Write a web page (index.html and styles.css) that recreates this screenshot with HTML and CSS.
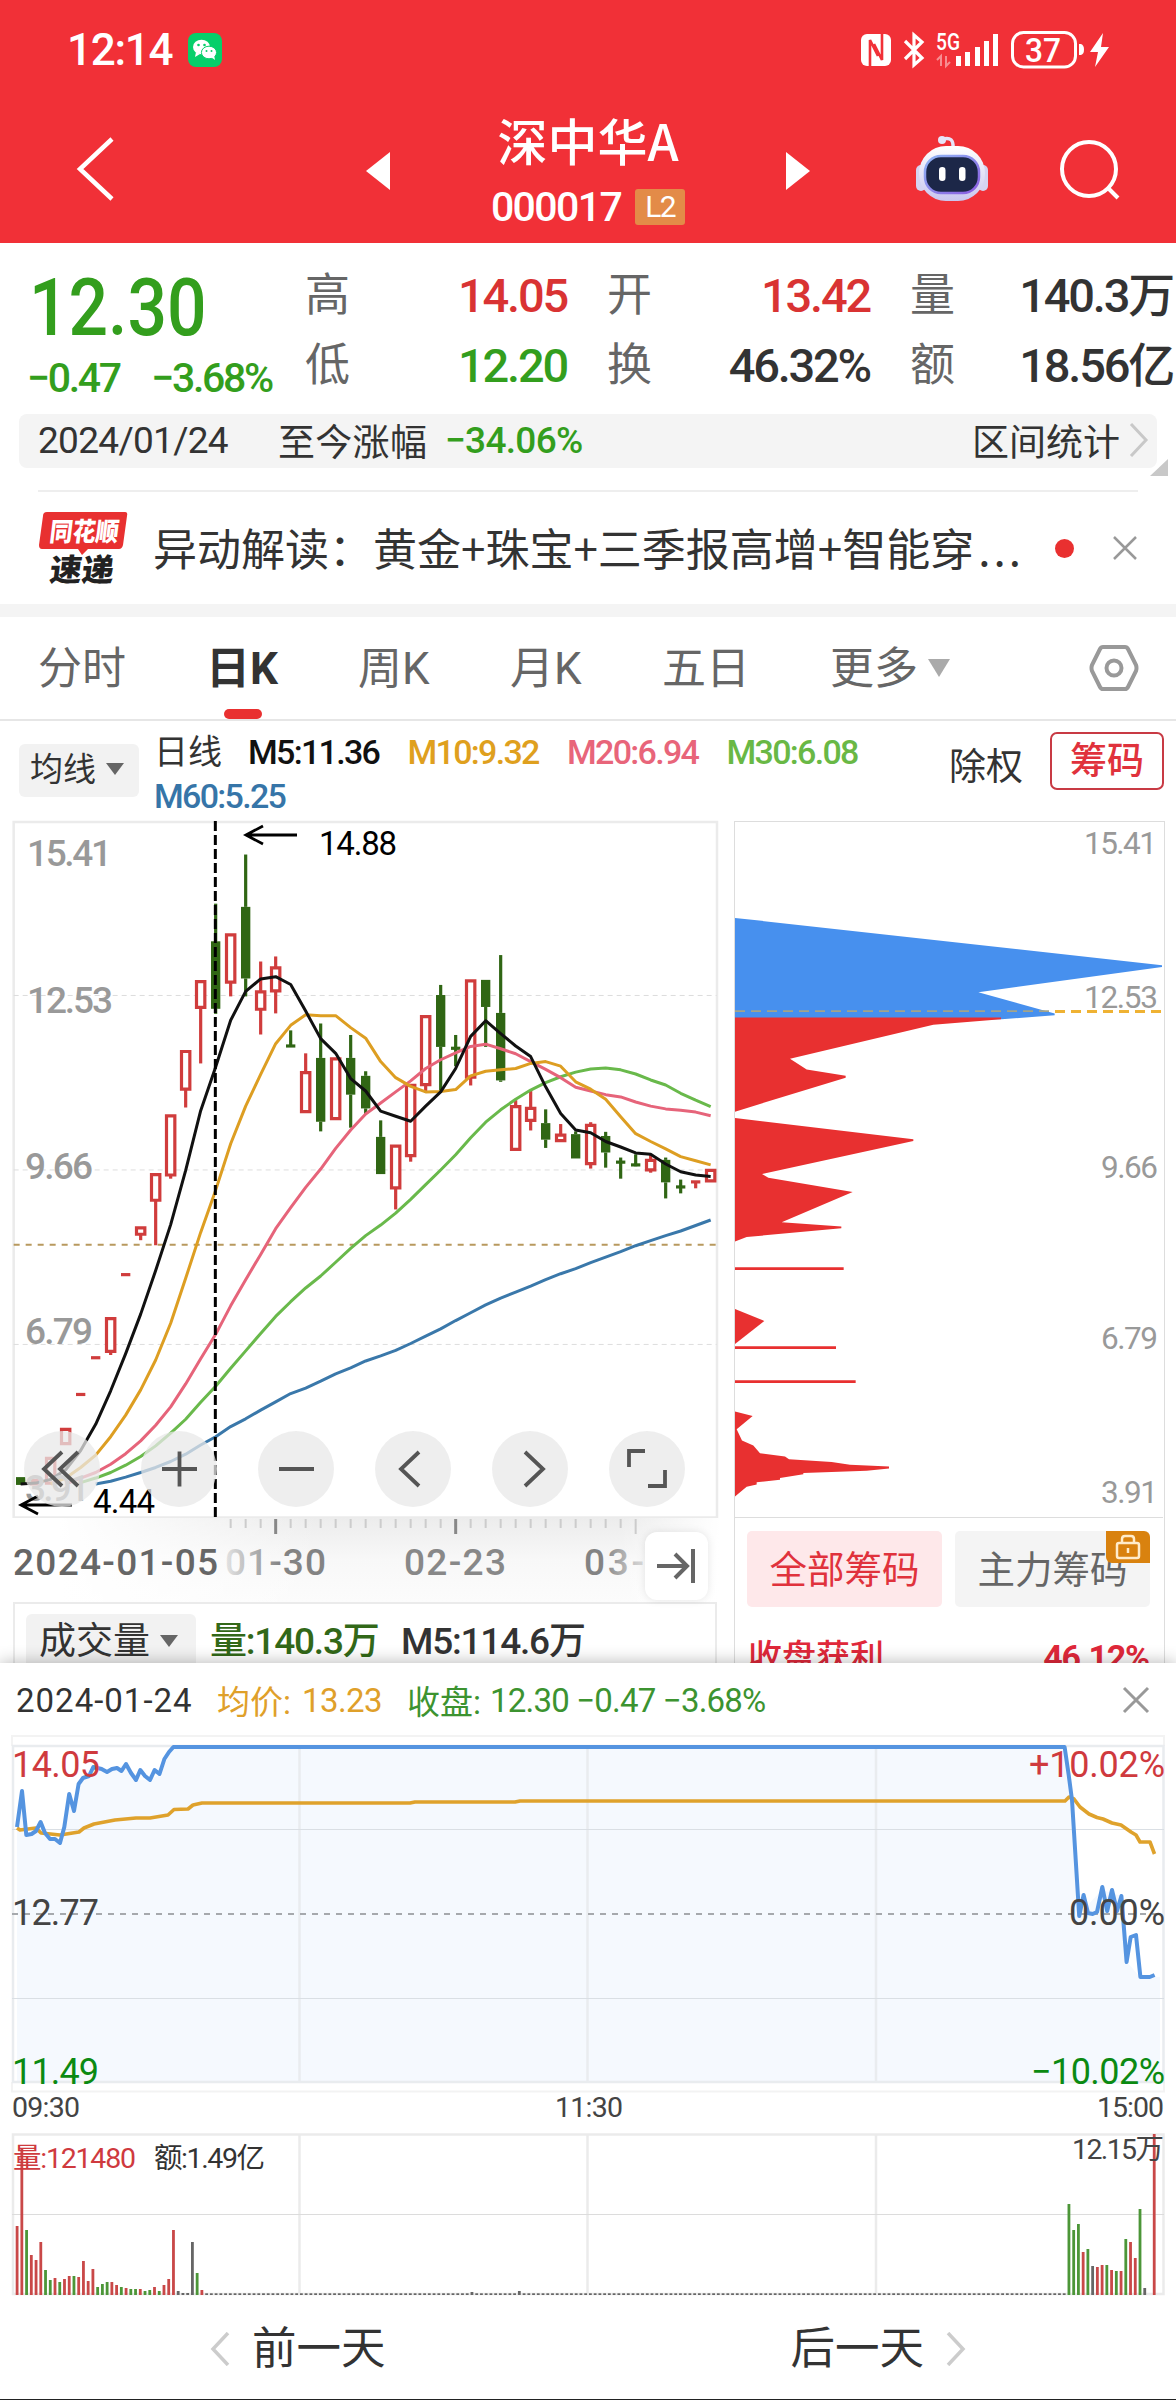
FILE: index.html
```html
<!DOCTYPE html>
<html lang="zh-CN">
<head>
    <meta charset="UTF-8">
    <meta name="viewport" content="width=device-width, initial-scale=1.0">
    <title>深中华A 000017</title>
    <link rel="stylesheet" href="styles.css">
</head>
<body>
    <header class="header">
        <div class="status-bar">
            <span class="clock">12:14</span>
            <svg class="wechat" width="34" height="34" viewBox="0 0 34 34">
                <rect width="34" height="34" rx="8" fill="#06cf6a"/>
                <ellipse cx="13.500" cy="14" rx="8.500" ry="7.300" fill="#fff"/>
                <path d="M8 19l-1 5 5-3z" fill="#fff"/>
                <ellipse cx="21" cy="19.500" rx="7.600" ry="6.300" fill="#fff" stroke="#06cf6a"/>
                <path d="M23 24l4 3-1-5z" fill="#fff"/>
                <g fill="#06cf6a"><circle cx="10.500" cy="12" r="1.300"/><circle cx="16.500" cy="12" r="1.300"/><circle cx="18.500" cy="18" r="1"/><circle cx="23.500" cy="18" r="1"/></g>
            </svg>
            <svg class="status-icons" width="252" height="44" viewBox="860 28 252 44" fill="#fff">
                <!-- nfc -->
                <rect x="861" y="34" width="30" height="32" rx="6"/>
                <path d="M870 67V40l8 16M882 33v27l-8-16" fill="none" stroke="#f13037" stroke-width="2.600"/>
                <!-- bluetooth -->
                <path d="M905 41l17 17-8 7V35l8 7-17 17" fill="none" stroke="#fff" stroke-width="3.200"/>
                <text x="936" y="50" font-size="23" font-weight="500" textLength="24" lengthAdjust="spacingAndGlyphs">5G</text>
                <path d="M941 66v-10l-4 4M946 56v10l4-4" fill="none" stroke="#fff" stroke-width="2" opacity=".45"/>
                <path d="M956 56h5v10h-5zM965 52h5v14h-5zM975 47h5v19h-5zM984 41h5v25h-5zM993 34h5v32h-5z"/>
                <rect x="1012.500" y="32.500" width="63" height="34.500" rx="11" fill="none" stroke="#fff" stroke-width="3"/>
                <path d="M1079 44h2q3 1 3 5.500t-3 5.500h-2z"/>
                <text x="1025" y="61.500" font-size="33" font-weight="500" textLength="36" lengthAdjust="spacingAndGlyphs">37</text>
                <path d="M1103 33l-13 19h8l-3 15 14-20h-8z"/>
            </svg>
        </div>
        <div class="title-bar">
            <svg class="back" width="40" height="68" viewBox="0 0 40 68"><path d="M36 4L4 34l32 30" fill="none" stroke="#fff" stroke-width="4.500"/></svg>
            <svg class="prev" width="24" height="38" viewBox="0 0 24 38"><path d="M24 0v38L0 19z" fill="#fff"/></svg>
            <div class="stock">
                <div class="stock-name">深中华A</div>
                <div class="stock-code">000017<span class="level">L2</span></div>
            </div>
            <svg class="next" width="24" height="38" viewBox="0 0 24 38"><path d="M0 0v38l24-19z" fill="#fff"/></svg>
            <svg class="robot" width="72" height="68" viewBox="0 0 72 68">
                <defs>
                    <linearGradient id="shell" x1="0" y1="0" x2="0" y2="1"><stop offset="0" stop-color="#fff"/><stop offset="1" stop-color="#c9c6ef"/></linearGradient>
                    <linearGradient id="rim" x1="0" y1="0" x2="1" y2="1"><stop offset="0" stop-color="#8fb6f5"/><stop offset="1" stop-color="#8a5be0"/></linearGradient>
                </defs>
                <path d="M27 5q11-3 10 9" fill="none" stroke="#e6e4f8" stroke-width="3.500"/>
                <circle cx="26" cy="6" r="4" fill="#e6e4f8"/>
                <rect x="0" y="31" width="10" height="26" rx="5" fill="#d5d4f2"/>
                <rect x="62" y="31" width="10" height="26" rx="5" fill="#d5d4f2"/>
                <rect x="3" y="12" width="66" height="55" rx="27" fill="url(#shell)"/>
                <rect x="9" y="22" width="54" height="37" rx="16" fill="#1c2748" stroke="url(#rim)" stroke-width="2.500"/>
                <rect x="23" y="33" width="6.500" height="14" rx="3.200" fill="#fff"/>
                <rect x="43" y="33" width="6.500" height="14" rx="3.200" fill="#fff"/>
            </svg>
            <svg class="search" width="62" height="62" viewBox="0 0 62 62" fill="none" stroke="#fff" stroke-width="4"><circle cx="30" cy="30" r="27"/><path d="M49 49l10 10"/></svg>
        </div>
    </header>

    <section class="quote">
        <div class="price-box">
            <div class="price">12.30</div>
            <div class="change"><span>−0.47</span><span>−3.68%</span></div>
        </div>
        <div class="quote-grid">
            <span class="label">高</span><span class="value up">14.05</span>
            <span class="label mid">开</span><span class="value up">13.42</span>
            <span class="label mid">量</span><span class="value">140.3万</span>
            <span class="label">低</span><span class="value down">12.20</span>
            <span class="label mid">换</span><span class="value">46.32%</span>
            <span class="label mid">额</span><span class="value">18.56亿</span>
        </div>
    </section>

    <section class="range-bar">
        <span class="range-date">2024/01/24</span>
        <span class="range-label">至今涨幅</span>
        <span class="range-value">−34.06%</span>
        <span class="range-stat">区间统计</span>
        <svg width="20" height="34" viewBox="0 0 20 34"><path d="M2 1l15 16L2 33" fill="none" stroke="#c8c8c8" stroke-width="3"/></svg>
        <i class="fold"></i>
    </section>

    <section class="news">
        <svg class="news-logo" width="90" height="74" viewBox="38 510 90 74">
            <path d="M47 511h78q3 0 2 4l-4 29q-1 4-4 4H88l-6 6-4-6H42q-3 0-3-4l4-29q0-4 4-4z" fill="#e83030"/>
            <g font-family="Noto Sans CJK SC" font-weight="900" transform="skewX(-7)">
                <text x="115" y="540" font-size="26" fill="#fff" textLength="69" lengthAdjust="spacingAndGlyphs">同花顺</text>
                <text x="120" y="580" font-size="31" fill="#222" textLength="64" lengthAdjust="spacingAndGlyphs">速递</text>
            </g>
        </svg>
        <span class="news-text">异动解读：黄金+珠宝+三季报高增+智能穿<span class="more-dots">...</span></span>
        <i class="dot"></i>
        <svg class="news-close" width="26" height="26" viewBox="0 0 26 26"><path d="M2 2l22 22M24 2L2 24" stroke="#999" stroke-width="2.500"/></svg>
    </section>

    <nav class="tabs">
        <span class="tab">分时</span>
        <span class="tab active">日K</span>
        <span class="tab">周K</span>
        <span class="tab">月K</span>
        <span class="tab">五日</span>
        <span class="tab more">更多<i class="caret"></i></span>
        <svg class="setting" width="50" height="46" viewBox="0 0 50 46" fill="none" stroke="#999" stroke-width="4"><path d="M14 2h22q2 0 3 2l8 16q1 3 0 6l-8 16q-1 2-3 2H14q-2 0-3-2L3 26q-1-3 0-6l8-16q1-2 3-2z"/><circle cx="25" cy="23" r="7.500"/></svg>
    </nav>

    <section class="ma-bar">
        <span class="select">均线<i class="caret"></i></span>
        <div class="ma-list">
            <span class="ma-name">日线</span>
            <span class="m5">M5:11.36</span>
            <span class="m10">M10:9.32</span>
            <span class="m20">M20:6.94</span>
            <span class="m30">M30:6.08</span>
            <span class="m60">M60:5.25</span>
        </div>
        <span class="adjust">除权</span>
        <span class="chip-btn">筹码</span>
    </section>

    <main class="charts">
        <div class="k-col">
            <div class="k-box">
                <svg class="k-chart" width="730" height="700" viewBox="0 21.8 2190 1524.6" preserveAspectRatio="none" id="kChart"></svg>
                <svg class="k-chart over" width="730" height="700" viewBox="0 820 730 700">
                    <g class="axis-text">
                        <text x="27" y="866" textLength="85">15.41</text>
                        <text x="27" y="1013" textLength="86">12.53</text>
                        <text x="25" y="1179" textLength="68">9.66</text>
                        <text x="25" y="1344" textLength="68">6.79</text>
                        <text x="25" y="1501" textLength="65">3.91</text>
                    </g>
                    <g class="mark-text">
                        <text x="319" y="854.500" textLength="78">14.88</text>
                        <text x="93" y="1513" textLength="62">4.44</text>
                    </g>
                    <path d="M297 835h-51M263 826l-17 9 17 9M72 1505H21M38 1496l-17 9 17 9" fill="none" stroke="#000" stroke-width="2.800"/>
                </svg>
                <div class="k-tools">
                    <svg viewBox="0 0 76 76"><path d="M38 21L20 38l18 17M54 21L36 38l18 17"/></svg>
                    <svg viewBox="0 0 76 76"><path d="M21 38h35M38.500 20.500v35"/></svg>
                    <svg viewBox="0 0 76 76"><path d="M21 38h35"/></svg>
                    <svg viewBox="0 0 76 76"><path d="M44 21L26 38l18 17"/></svg>
                    <svg viewBox="0 0 76 76"><path d="M33 21l18 17-18 17"/></svg>
                    <svg viewBox="0 0 76 76"><path d="M36 20H20v16M56 39v16H39"/></svg>
                </div>
            </div>
            <div class="time-axis">
                <svg width="717" height="84" viewBox="0 1518 717 84" id="timeAxis">
                    <defs>
                        <linearGradient id="fadeL"><stop offset="0" stop-color="#666" stop-opacity=".15"/><stop offset=".55" stop-color="#666" stop-opacity=".8"/></linearGradient>
                        <linearGradient id="fadeR"><stop offset=".3" stop-color="#666" stop-opacity=".8"/><stop offset="1" stop-color="#666" stop-opacity=".2"/></linearGradient>
                    </defs>
                    <text x="13" y="1575" fill="#666" textLength="205">2024-01-05</text>
                    <text x="225" y="1575" fill="url(#fadeL)" textLength="101">01-30</text>
                    <text x="404" y="1575" fill="#888" textLength="102">02-23</text>
                    <text x="584" y="1575" fill="url(#fadeR)" textLength="60">03-</text>
                </svg>
                <div class="to-end">
                    <svg width="40" height="36" viewBox="0 0 40 36" fill="none" stroke="#666" stroke-width="4"><path d="M0 18h29M18 6l12 12-12 12M36 1v34"/></svg>
                </div>
            </div>
            <div class="vol-head">
                <span class="select vol-select">成交量<i class="caret"></i></span>
                <span class="vol-now">量:140.3万</span>
                <span class="vol-m5">M5:114.6万</span>
            </div>
        </div>
        <div class="chip-col">
            <svg class="chip-chart" width="456" height="700" viewBox="0 21.8 1368 1524.6" preserveAspectRatio="none">
                <path fill="#4790ee" d="M45 235L1326 338v4L775 397 1004 443v4L845 456H45z"/>
                <g fill="#e83030">
                    <path d="M45 452H843v4L640 468 210 542 260 565 377 579v4L45 657z"/>
                    <path d="M45 671L580 717v4L126 793 145 801 398 832 185 898 364 907v4L80 930 45 940z"/>
                    <path d="M45 1087L133 1113 45 1163z"/>
                    <path d="M45 1310L98 1320 50 1349 66 1373 100 1384 120 1401 195 1408 207 1414 335 1420 390 1426 507 1430v4L440 1439 250 1444v3L180 1455v4L110 1464v5L80 1474 62 1485 45 1495z"/>
                    <path d="M45 996h326v6H45zM45 1168h303v6H45zM45 1242h362v6H45z"/>
                </g>
                <path class="chip-dash in" d="M45 438H990"/>
                <path class="chip-dash" d="M1005 439H1326"/>
            </svg>
            <svg class="chip-chart over" width="456" height="700" viewBox="720 820 456 700">
                <g class="chip-text">
                    <text x="1084" y="854" textLength="73">15.41</text>
                    <text x="1084" y="1007.500" textLength="74">12.53</text>
                    <text x="1101" y="1178" textLength="57">9.66</text>
                    <text x="1101" y="1349" textLength="57">6.79</text>
                    <text x="1101" y="1503" textLength="57">3.91</text>
                </g>
            </svg>
            <div class="chip-tabs">
                <span class="chip-tab on">全部筹码</span>
                <span class="chip-tab">主力筹码
                    <i class="lock"><svg width="26" height="26" viewBox="0 0 26 26" fill="none" stroke="#ffeccb" stroke-width="2.500"><rect x="2" y="9" width="22" height="15" rx="2"/><path d="M7 9V5q0-3 3-3h6q3 0 3 3v4M13 14v5"/></svg></i>
                </span>
            </div>
            <div class="chip-row"><span>收盘获利</span><span class="chip-pct">46.12%</span></div>
        </div>
    </main>

    <section class="sheet">
        <div class="sheet-head">
            <span class="s-date">2024-01-24</span>
            <span class="s-avg">均价:</span><span class="s-avg num1">13.23</span>
            <span class="s-close">收盘:</span><span class="s-close num2">12.30 −0.47 −3.68%</span>
            <svg width="28" height="28" viewBox="0 0 28 28"><path d="M2 2l24 24M26 2L2 26" stroke="#999" stroke-width="3"/></svg>
        </div>
        <svg class="day-chart" width="1176" height="396" viewBox="0 1734 1176 396">
            <g fill="none" stroke="#f3f3f3" stroke-width="2"><path d="M12 1746v-10H1164v10M12 2082v9.500H1164v-9.500"/></g>
            <path fill="#f5f9fe" d="M17 2082V1827L22 1791 26 1835 36 1831 41 1822 50 1839 60 1843 69 1794 74 1811 79 1784 93 1767 107 1772 126 1764 136 1780 150 1780 160 1774 173 1747H1065L1074 1837 1079 1914 1102 1890 1121 1896 1127 1962 1140 1977H1160V2082z"/>
            <g fill="none" stroke="#e9ecef" stroke-width="2.500"><path d="M13 1746H1163.500V2082H13zM299.500 1746V2082M587.500 1746V2082M876 1746V2082"/></g>
            <path d="M12 1829.500H1164M12 1998.500H1164" stroke="#dadfe4"/>
            <path d="M12 1914H1164" stroke="#a6a9ad" stroke-width="2" stroke-dasharray="6 6"/>
            <polyline class="avg-line" points="17,1828 20,1830 36,1828 41,1833 60,1835 79,1832 84,1828 94,1824 115,1820 136,1818 150,1818 168,1815 174,1809.500 188,1809 193,1805 202,1803 410,1803 415,1802 515,1802 520,1801 1065,1801 1069,1797 1074,1799 1080,1807 1089,1814 1097,1817.500 1103,1819 1112,1823 1121,1825 1131,1832 1136,1835 1140,1842 1150,1842 1154.500,1854"/>
            <polyline class="price-line" points="17,1827 22,1791 26.300,1835 31.600,1834 36,1831 40.600,1822 45,1833 50,1839 55,1839 60,1843 64.300,1827 69.200,1794 74,1811 78.600,1784 83,1778 89,1776 93.300,1767 101.600,1769 107,1772 112,1769 117,1768 121.500,1771 126,1764 131,1773 136,1780 140.300,1770 145,1776 150,1780 154.600,1770 159.500,1774 164.400,1759 169,1752 173.400,1747 1064.600,1747 1068.700,1775 1072,1800 1074.300,1837 1079.200,1916 1083.600,1895 1088,1913 1092.600,1914 1097,1912 1102.300,1887 1107.200,1911 1112,1890 1117,1911 1121.400,1896 1126.600,1962 1130.700,1937 1136,1935 1140.400,1977 1149.800,1977 1154.600,1975"/>
            <g font-size="36">
                <text x="12" y="1777" fill="#cf3a3e" textLength="88">14.05</text>
                <text x="12" y="1925" fill="#444" textLength="87">12.77</text>
                <text x="12" y="2084" fill="#0b8a12" textLength="87">11.49</text>
                <text x="1029" y="1777" fill="#cf3a3e" textLength="136">+10.02%</text>
                <text x="1069" y="1925" fill="#444" textLength="96">0.00%</text>
                <text x="1031" y="2084" fill="#0b8a12" textLength="134">−10.02%</text>
            </g>
            <g font-size="28.500" fill="#444">
                <text x="12" y="2117" textLength="68">09:30</text>
                <text x="555" y="2117" textLength="68">11:30</text>
                <text x="1097" y="2117" textLength="67">15:00</text>
            </g>
        </svg>
        <svg class="vol-chart" width="1176" height="166" viewBox="0 2132 1176 166">
            <g fill="none" stroke="#ebebeb" stroke-width="2.500"><path d="M13 2134.500H1163.500V2294H13zM299.500 2134V2294M587.500 2134V2294M876 2134V2294"/></g>
            <path d="M12 2214.500H1164" stroke="#dcdcdc"/>
            <g id="volBars"></g>
            <g font-size="28.500">
                <text x="13" y="2168" fill="#cf3a3e" textLength="123">量:121480</text>
                <text x="154" y="2168" fill="#333" textLength="111">额:1.49亿</text>
                <text x="1072" y="2159" fill="#444" textLength="92">12.15万</text>
            </g>
        </svg>
        <div class="day-nav">
            <span class="day-btn"><svg width="20" height="34" viewBox="0 0 20 34"><path d="M18 1L3 17l15 16"/></svg>前一天</span>
            <span class="day-btn">后一天<svg width="20" height="34" viewBox="0 0 20 34"><path d="M2 1l15 16L2 33"/></svg></span>
        </div>
    </section>
    <script src="script.js"></script>
</body>
</html>
```
FILE: styles.css
```css
* {
    box-sizing: border-box;
}

body {
    margin: 0;
    width: 1176px;
    height: 2400px;
    overflow: hidden;
    background: #fff;
    color: #333;
    font-family: Roboto, "Noto Sans CJK SC", sans-serif;
    border-bottom: 1px solid #222;
}

svg {
    display: block;
    flex: none;
}

i {
    font-style: normal;
}

/* 顶部 */
.header {
    height: 243px;
    background: #f13037;
    color: #fff;
}

.status-bar {
    display: flex;
    align-items: center;
    height: 78px;
    padding: 22px 64px 0 67px;
}

.clock {
    width: 121px;
    font-size: 44px;
    font-weight: 500;
    letter-spacing: -1.3px;
    line-height: 56px;
}

.status-icons {
    margin-left: auto;
}

.title-bar {
    display: flex;
    align-items: center;
    height: 165px;
    padding: 20px 0 0 76px;
}

.prev {
    margin: 1px 0 0 250px;
}

.next {
    margin-top: 1px;
}

.back {
    margin-bottom: 4px;
}

.stock {
    width: 396px;
    text-align: center;
}

.stock-name {
    font-size: 50px;
    line-height: 66px;
    font-weight: 500;
    font-family: "Noto Sans CJK SC", sans-serif;
}

.stock-code {
    display: flex;
    align-items: center;
    justify-content: center;
    gap: 14px;
    height: 64px;
    padding-top: 6px;
    font-size: 41px;
    letter-spacing: -1.6px;
    font-weight: 500;
}

.level {
    width: 50px;
    height: 36px;
    border-radius: 3px;
    background: #e38b48;
    font-size: 30px;
    font-weight: 400;
    line-height: 36px;
}

.robot {
    margin: 0 0 5px 106px;
}

.search {
    margin: 0 0 1px 71px;
}

/* 报价 */
.quote {
    display: flex;
    height: 171px;
}

.price-box {
    width: 306px;
    padding: 30px 0 0 29px;
    color: #339e1d;
}

.price {
    font-size: 80px;
    font-weight: 500;
    line-height: 70px;
    transform: scaleX(.87);
    transform-origin: left;
}

.change {
    display: flex;
    justify-content: space-between;
    padding-right: 34px;
    margin: 11px 0 0 -2px;
    font-size: 41px;
    font-weight: 500;
    line-height: 48px;
    letter-spacing: -2.3px;
}

.quote-grid {
    display: grid;
    grid-template-columns: 44px 218px 84px 219px 84px 219px;
    grid-template-rows: 70px 69px;
    margin-left: -1px;
    padding-top: 18px;
}

.label {
    font-size: 45px;
    line-height: 69px;
    color: #666;
}

.mid {
    padding-left: 40px;
}

.value {
    font-size: 47px;
    font-weight: 500;
    line-height: 70px;
    letter-spacing: -2.2px;
    text-align: right;
    white-space: nowrap;
}

.up {
    color: #d93333;
}

.down {
    color: #339e1d;
}

/* 区间涨幅 */
.range-bar {
    position: relative;
    display: flex;
    align-items: center;
    width: 1138px;
    height: 54px;
    margin: 0 0 0 19px;
    padding: 0 8px 2px 19px;
    border-radius: 8px;
    background: #f4f4f4;
    font-size: 37px;
}

.range-date {
    width: 240px;
    letter-spacing: -.7px;
}

.range-label {
    width: 167px;
    letter-spacing: .3px;
}

.range-value {
    color: #339e1d;
    font-weight: 500;
    letter-spacing: -.7px;
}

.range-stat {
    margin: 0 9px 0 auto;
}

.fold {
    position: absolute;
    right: -11px;
    bottom: -8px;
    border-left: 18px solid transparent;
    border-bottom: 17px solid #c8c8c8;
}

/* 资讯 */
.news {
    display: flex;
    align-items: center;
    height: 114px;
    margin: 22px 38px 0;
    border-top: 2px solid #eee;
}

.news-text {
    width: 892px;
    margin: -3px 0 0 25px;
    font-family: "Noto Sans CJK SC", sans-serif;
    font-size: 44px;
    line-height: 60px;
    white-space: nowrap;
}

.more-dots {
    margin-left: 4px;
    letter-spacing: 3px;
}

.dot {
    width: 19px;
    height: 19px;
    margin-left: 10px;
    border-radius: 50%;
    background: #e93030;
}

.news-close {
    margin-left: 38px;
}

/* 周期 */
.tabs {
    display: flex;
    height: 117px;
    padding: 0 37px 0 38px;
    border-top: 13px solid #f4f4f4;
    border-bottom: 2px solid #e6e6e6;
    font-size: 44px;
    line-height: 104px;
    color: #666;
}

.tab {
    width: 152px;
    white-space: nowrap;
}

.tab:first-child {
    width: 168px;
}

.tab:nth-child(5) {
    width: 168px;
}

.active {
    position: relative;
    color: #333;
    font-weight: 700;
}

.active::after {
    content: "";
    position: absolute;
    left: 18px;
    bottom: 0;
    width: 38px;
    height: 10px;
    border-radius: 5px;
    background: #e93030;
}

.caret {
    display: inline-block;
    border: 9px solid transparent;
    border-top: 12px solid #666;
    border-bottom: 0;
    vertical-align: middle;
    margin: -6px 0 0 10px;
}

.more .caret {
    border-width: 18px 11px 0;
    border-top-color: #aaa;
    margin-top: -8px;
}

.setting {
    margin: 28px 0 0 auto;
}

/* 均线 */
.ma-bar {
    display: flex;
    height: 99px;
    padding: 0 12px 0 19px;
    font-size: 34px;
}

.select {
    width: 120px;
    height: 53px;
    margin-top: 23px;
    padding-left: 11px;
    border-radius: 6px;
    background: #f2f2f2;
    font-size: 33px;
    line-height: 52px;
    white-space: nowrap;
}

.ma-list {
    display: flex;
    flex-wrap: wrap;
    align-content: flex-start;
    width: 760px;
    margin: 9px 0 0 15px;
    line-height: 44px;
    font-weight: 500;
    letter-spacing: -1.7px;
}

.ma-list span {
    width: 159.5px;
}

.ma-list .ma-name {
    width: 94px;
    font-weight: 400;
    letter-spacing: 0;
    font-size: 34px;
}

.m5 {
    color: #111;
}

.m10 {
    color: #dfa01e;
}

.m20 {
    color: #e8657a;
}

.m30 {
    color: #69b845;
}

.m60 {
    color: #3675a8;
}

.adjust {
    margin: 20px 0 0 35px;
    font-size: 37px;
    line-height: 54px;
    white-space: nowrap;
}

.chip-btn {
    width: 114px;
    height: 58px;
    margin: 11px 0 0 auto;
    border: 2px solid #c83a44;
    border-radius: 7px;
    color: #e0323c;
    font-size: 37px;
    font-weight: 500;
    line-height: 56px;
    text-align: center;
}

/* 图表 */
.charts {
    display: flex;
    height: 843px;
    overflow: hidden;
}

.k-col {
    width: 720px;
}

.k-box {
    position: relative;
    height: 698px;
}

.k-chart {
    width: 730px;
    overflow: visible;
}

.over {
    position: absolute;
    left: 0;
    top: 0;
}

.k-chart *,
.chip-chart * {
    vector-effect: non-scaling-stroke;
}

.frame {
    fill: none;
    stroke: #ebebeb;
    stroke-width: 2.5px;
}

.k-grid {
    fill: none;
    stroke: #ddd;
    stroke-width: 1px;
    stroke-dasharray: 5 4;
}

.cost-line {
    stroke: #b8995e;
    stroke-width: 2px;
    stroke-dasharray: 6 6;
}

.cross {
    stroke: #000;
    stroke-width: 3px;
    stroke-dasharray: 10 4;
}

.k-red {
    fill: #fff;
    stroke: #d03c3c;
    stroke-width: 3.2px;
}

.k-green {
    fill: #306614;
    stroke: #306614;
    stroke-width: 3.2px;
}

.k-green-body {
    fill: #306614;
}

.ma {
    fill: none;
    stroke-width: 3px;
    stroke-linejoin: round;
}

.axis-text {
    fill: #999;
    font-size: 37px;
    font-weight: 500;
}

.mark-text {
    fill: #000;
    font-size: 33px;
}

.k-tools {
    position: absolute;
    left: 24px;
    top: 611px;
    display: flex;
    gap: 41px;
}

.k-tools svg {
    width: 76px;
    height: 76px;
    border-radius: 50%;
    background: rgba(232, 232, 232, .75);
    fill: none;
    stroke: #555;
    stroke-width: 3.8px;
}

.time-axis {
    position: relative;
    height: 84px;
    background: linear-gradient(90deg, #fff 60px, transparent 320px, transparent 620px, #fff), linear-gradient(#ececec, #f8f8f8 50%, #fcfcfc);
    font-size: 37px;
    font-weight: 500;
}

.tick {
    stroke: #ccc;
    stroke-width: 2px;
}

.tick-month {
    stroke: #888;
    stroke-width: 3px;
}

.to-end {
    position: absolute;
    left: 645px;
    top: 14px;
    display: flex;
    align-items: center;
    justify-content: center;
    width: 63px;
    height: 68px;
    border-radius: 12px;
    background: #fff;
    box-shadow: 0 0 8px rgba(0, 0, 0, .1);
}

.vol-head {
    display: flex;
    width: 704px;
    height: 80px;
    margin-left: 13px;
    border: 2px solid #ebebeb;
    border-bottom: 0;
    font-size: 37px;
    line-height: 75px;
    white-space: nowrap;
}

.vol-select {
    width: 170px;
    height: 60px;
    margin: 10px 0 0 11px;
    padding-left: 13px;
    font-size: 37px;
    line-height: 55px;
}

.vol-now {
    width: 191px;
    margin-left: 14px;
    color: #326818;
    font-weight: 500;
    letter-spacing: -1.2px;
}

.vol-m5 {
    font-weight: 500;
    letter-spacing: -1.2px;
}

/* 筹码 */
.chip-col {
    position: relative;
    width: 456px;
}

.chip-col::before {
    content: "";
    position: absolute;
    left: 14px;
    top: 1px;
    width: 429px;
    height: 900px;
    border: 1.5px solid #ddd;
}

.chip-col::after {
    content: "";
    position: absolute;
    left: 14px;
    top: 697px;
    width: 429px;
    border-top: 1px solid #ddd;
}

.chip-chart {
    position: relative;
}

.chip-chart.over {
    position: absolute;
}

.chip-dash {
    stroke: #efb233;
    stroke-width: 3px;
    stroke-dasharray: 10 6;
}

.chip-dash.in {
    stroke: #a3a48a;
    stroke-width: 1.8px;
}

.chip-text {
    fill: #999;
    font-size: 31.5px;
}

.chip-tabs {
    display: flex;
    gap: 13px;
    margin: 11px 0 0 27px;
}

.chip-tab {
    position: relative;
    width: 195px;
    height: 76px;
    border-radius: 5px;
    background: #f4f4f4;
    color: #666;
    font-size: 37.5px;
    line-height: 79px;
    text-align: center;
}

.chip-tab.on {
    background: #fee8ea;
    color: #e0323c;
}

.lock {
    position: absolute;
    right: 0;
    top: 0;
    display: flex;
    align-items: center;
    justify-content: center;
    width: 44px;
    height: 32px;
    border-radius: 0 6px 0 6px;
    background: #d9820f;
}

.chip-row {
    display: flex;
    justify-content: space-between;
    margin: 27px 27px 0 28px;
    color: #e0283a;
    font-size: 34px;
    font-weight: 500;
    line-height: 46px;
}

.chip-pct {
    font-weight: 700;
    letter-spacing: -1.2px;
}

/* 分时浮层 */
.sheet {
    position: relative;
    height: 737px;
    background: #fff;
    box-shadow: 0 0 16px rgba(0, 0, 0, .3);
}

.sheet-head {
    display: flex;
    align-items: center;
    height: 71px;
    padding: 3px 26px 0 16px;
    font-size: 33px;
    white-space: nowrap;
}

.s-date {
    width: 201px;
    letter-spacing: 1px;
}

.s-avg {
    width: 85px;
    color: #dfa02a;
}

.num1 {
    width: 105px;
    letter-spacing: -.6px;
}

.s-close {
    width: 83px;
    color: #3c9330;
}

.num2 {
    width: auto;
    letter-spacing: -.8px;
}

.sheet-head svg {
    margin-left: auto;
}

.price-line {
    fill: none;
    stroke: #5594e0;
    stroke-width: 4px;
    stroke-linejoin: round;
}

.avg-line {
    fill: none;
    stroke: #dfa22c;
    stroke-width: 3.6px;
    stroke-linejoin: round;
}

.vol-chart {
    margin-top: 2px;
}

.day-nav {
    display: flex;
    justify-content: space-between;
    padding: 17px 210px 0;
    font-size: 44.5px;
    line-height: 68px;
}

.day-btn {
    display: flex;
    align-items: center;
    gap: 22px;
}

.day-btn svg {
    fill: none;
    stroke: #ccc;
    stroke-width: 3.5px;
}
```
FILE: script.js
```javascript
const NS = 'http://www.w3.org/2000/svg';

function add(parent, tag, attrs) {
    const el = document.createElementNS(NS, tag);
    for (const k in attrs) el.setAttribute(k, attrs[k]);
    parent.appendChild(el);
    return el;
}

// 每根K线间隔 45 单位
const dayX = i => 62 + 45 * i;

// [颜色, 最高, 实体上, 实体下, 最低]
const candles = [
    ['g', 1453, 1453, 1470, 1470], ['r', 1458, 1458, 1468, 1468], ['r', 1410, 1410, 1466, 1466],
    ['r', 1347, 1347, 1380, 1380], ['r', 1273, 1273, 1273, 1273], ['r', 1193, 1193, 1193, 1193],
    ['r', 1106, 1106, 1179, 1187], ['r', 1012, 1012, 1012, 1012], ['r', 908, 908, 924, 937],
    ['r', 792, 792, 850, 948], ['r', 664, 664, 795, 803], ['r', 524, 524, 608, 648],
    ['r', 372, 372, 430, 552], ['g', 204, 286, 433, 444], ['r', 270, 270, 375, 406],
    ['g', 97, 211, 367, 406], ['r', 330, 394, 434, 489], ['r', 319, 342, 394, 443],
    ['g', 480, 514, 514, 514], ['r', 530, 570, 657, 657], ['g', 465, 540, 679, 700],
    ['r', 540, 540, 672, 672], ['g', 490, 540, 620, 692], ['g', 569, 579, 650, 662],
    ['g', 676, 712, 793, 793], ['r', 730, 730, 823, 870], ['r', 598, 598, 753, 766],
    ['r', 448, 448, 598, 616], ['g', 381, 403, 516, 612], ['g', 490, 519, 519, 558],
    ['r', 370, 370, 582, 600], ['g', 370, 370, 429, 516], ['g', 316, 442, 589, 592],
    ['r', 632, 644, 739, 739], ['r', 610, 648, 676, 698], ['g', 652, 682, 718, 736],
    ['r', 684, 706, 720, 720], ['g', 700, 706, 759, 759], ['r', 680, 685, 770, 781],
    ['g', 701, 710, 746, 779], ['g', 757, 767, 767, 803], ['g', 750, 773, 773, 776],
    ['r', 751, 761, 784, 790], ['g', 757, 762, 811, 846], ['g', 805, 821, 821, 835],
    ['r', 810, 810, 810, 824], ['r', 783, 783, 808, 808]
];

// 均线: 颜色, 起始下标, 数据
const lines = [
    ['#3a78aa', 5, [1468, 1462, 1453, 1443, 1432, 1419, 1403, 1383, 1365, 1343, 1326, 1307, 1289, 1271, 1259, 1244, 1228, 1215, 1200, 1189, 1177, 1162, 1146, 1130, 1112, 1095, 1078, 1063, 1050, 1037, 1023, 1010, 999, 986, 974, 962, 949, 938, 927, 917, 905, 893]],
    ['#69b94b', 4, [1465, 1455, 1443, 1427, 1408, 1385, 1357, 1327, 1290, 1255, 1216, 1178, 1140, 1103, 1071, 1041, 1015, 985, 955, 927, 904, 878, 848, 816, 784, 751, 714, 680, 653, 630, 610, 594, 581, 571, 564, 562, 566, 575, 588, 599, 617, 632, 646]],
    ['#e6647a', 3, [1468, 1455, 1443, 1425, 1402, 1374, 1340, 1300, 1250, 1195, 1142, 1080, 1023, 968, 912, 866, 822, 782, 737, 697, 662, 638, 614, 590, 563, 544, 529, 515, 510, 520, 531, 548, 565, 583, 604, 612, 620, 625, 636, 645, 651, 654, 658, 666]],
    ['#dd9e22', 2, [1468, 1455, 1432, 1405, 1365, 1318, 1263, 1198, 1118, 1020, 920, 828, 727, 645, 576, 509, 469, 446, 448, 448, 474, 497, 548, 583, 602, 614, 613, 609, 579, 569, 566, 563, 552, 548, 558, 592, 608, 630, 668, 705, 722, 738, 755, 764, 773]],
    ['#111', 0, [1468, 1466, 1458, 1437, 1395, 1338, 1265, 1184, 1098, 1003, 903, 785, 655, 560, 458, 395, 368, 363, 380, 438, 498, 530, 585, 612, 656, 667, 678, 645, 614, 563, 493, 459, 487, 514, 537, 603, 661, 697, 703, 722, 734, 747, 750, 771, 788, 795, 798]]
];

const k = document.getElementById('kChart');
add(k, 'rect', { x: 41, y: 26, width: 2110, height: 1515, class: 'frame' });
add(k, 'path', { d: 'M41 404H2150M41 784H2150M41 1164H2150', class: 'k-grid' });
add(k, 'path', { d: 'M41 947H2150', class: 'cost-line' });

candles.forEach(([c, high, top, bottom, low], i) => {
    const x = dayX(i);
    const cls = c === 'r' ? 'k-red' : 'k-green';
    if (high < top) add(k, 'path', { d: `M${x} ${high}V${top}`, class: cls });
    if (low > bottom) add(k, 'path', { d: `M${x} ${bottom}V${low}`, class: cls });
    if (top === bottom) add(k, 'path', { d: `M${x - 14} ${top}H${x + 14}`, class: cls });
    else if (c === 'r') add(k, 'rect', { x: x - 12.5, y: top + 2, width: 25, height: bottom - top - 2, class: cls });
    else add(k, 'rect', { x: x - 14, y: top, width: 28, height: bottom - top, class: 'k-green-body' });
});

lines.forEach(([color, start, data]) => {
    const points = data.map((y, i) => `${dayX(start + i)},${y}`).join(' ');
    add(k, 'polyline', { points, class: 'ma', stroke: color });
});
add(k, 'path', { d: 'M646 24V1540', class: 'cross' });

// 时间轴刻度
const axis = document.getElementById('timeAxis');
for (let i = 14; i <= 41; i++) {
    const month = i === 17 || i === 29 || i === 41;
    const x = dayX(i) / 3;
    add(axis, 'path', { d: `M${x} 1519V${month ? 1534 : 1528}`, class: month && i < 41 ? 'tick-month' : 'tick' });
}

// 分时成交量: 下标 -> [颜色, 高度]
const colors = { r: '#c94848', g: '#4c9638', k: '#666' };
const head = 'r69 r146 g65 r40 r35 r53 g25 g15 r17 g13 r16 r19 g19 r18 r34 r14 r26 g8 g11 g13 r13 r10 g8 r7 g6 g6 r6 g4 g5 r8 g4 r10 r16 r65 k4 k2 k2 k53 g22 r5'.split(' ');
const tail = 'g91 g65 g71 r43 g46 k29 r28 r30 g30 r25 g24 r24 g56 r53 r37 g86 k7 k0 r161'.split(' ');
const vol = document.getElementById('volBars');
for (let i = 0; i <= 240; i++) {
    let v = 'k1.7';
    if (i < head.length) v = head[i];
    else if (i >= 222) v = tail[i - 222];
    else if (i === 96) v = 'k3';
    else if (i === 106) v = 'k4';
    const h = parseFloat(v.slice(1));
    add(vol, 'rect', { x: 15.7 + 4.738 * i, y: 2295 - h, width: 2.8, height: h, fill: colors[v[0]] });
}
```
